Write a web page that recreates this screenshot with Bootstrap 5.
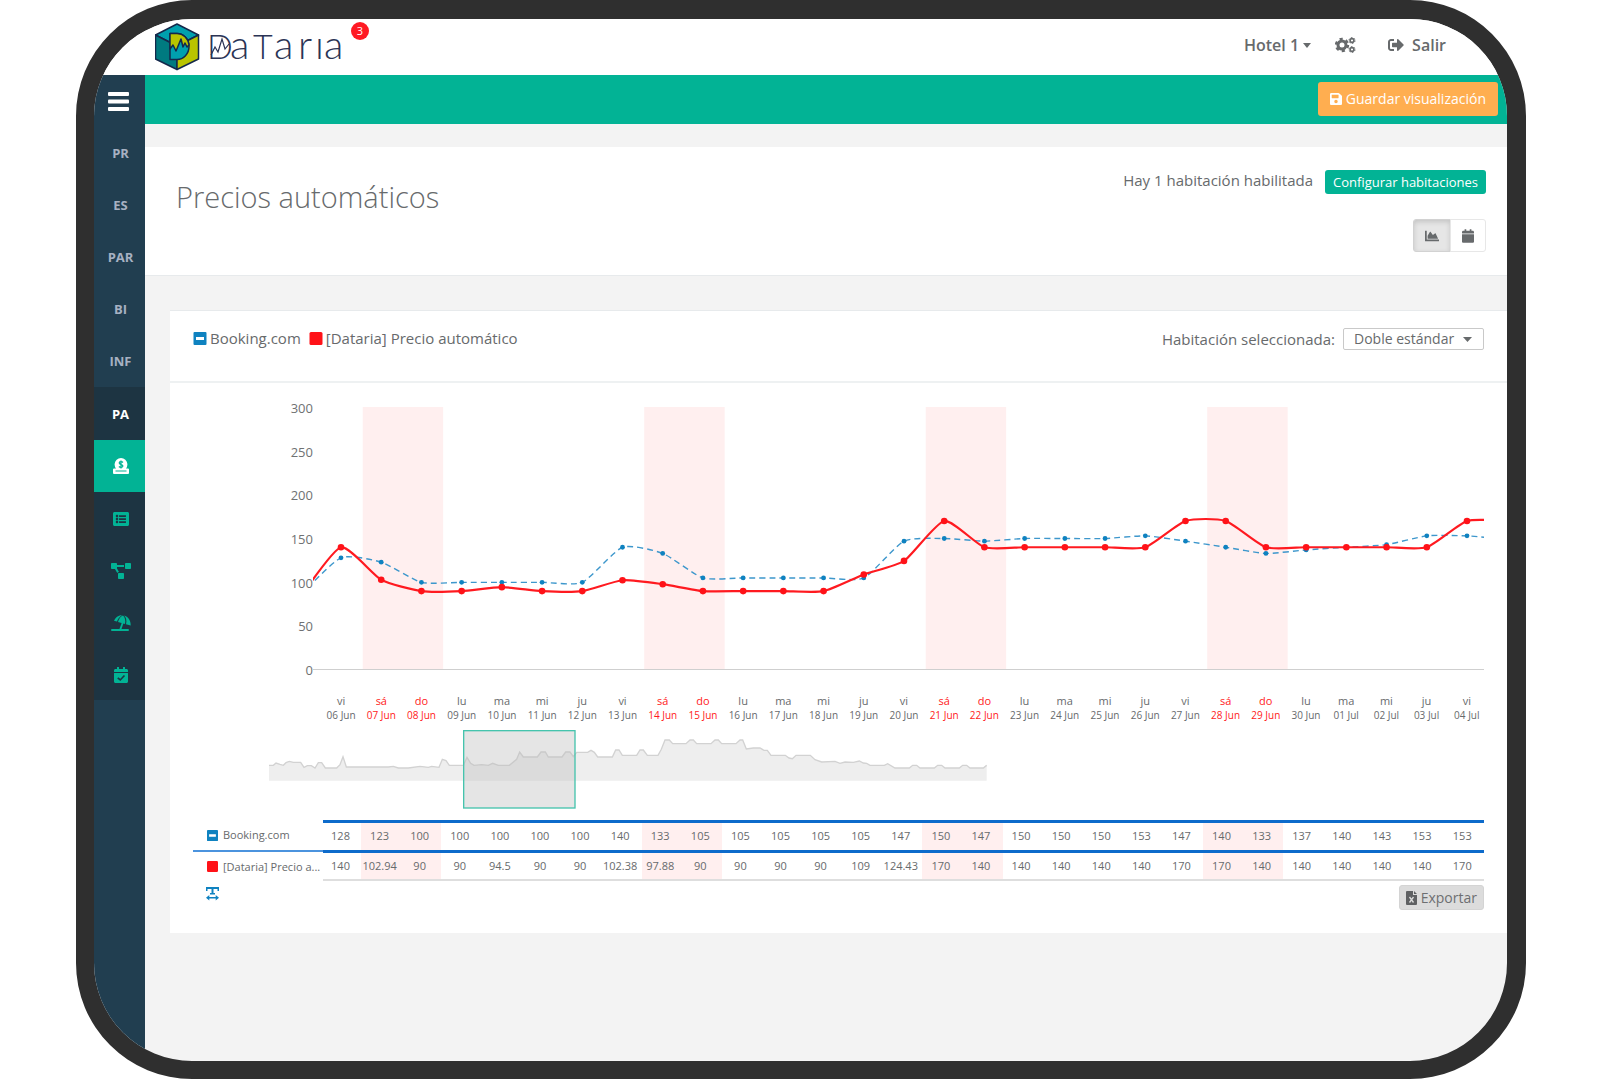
<!DOCTYPE html>
<html lang="es">
<head>
<meta charset="utf-8">
<meta name="viewport" content="width=device-width, initial-scale=1">
<title>Dataria - Precios automáticos</title>
<link href="https://cdn.jsdelivr.net/npm/bootstrap@5.3.0/dist/css/bootstrap.min.css" rel="stylesheet">
<style>
  body { font-family: "Open Sans", "Noto Sans", sans-serif; font-size: 15px; line-height: 20px; color: #676a6c; background: #fff; }
  svg { display: block; flex: none; }
  a { color: inherit; text-decoration: none; }

  .tablet { margin: 0 74px 0 76px; min-height: calc(100vh - 1px); border: 19px solid #2f2f2f; border-width: 19px 19px 18px 18px; border-radius: 116px; overflow: hidden; background: #f3f3f3; }
  .topbar { height: 56px; padding: 0 61px; }
  .topbar .top-link { font-size: 16px; font-weight: 600; line-height: 20px; }
  .notice { top: 3px; left: 196px; width: 18px; height: 18px; border-radius: 50%; background: #ff1a24; font-size: 11px; line-height: 18px; }

  .side { width: 51px; background: #213e50; }
  .side .burger { height: 52px; padding: 0 14px; }
  .side a { height: 52px; padding-left: 2px; font-size: 13px; font-weight: 700; color: #a7b1c2; }
  .side .sub { padding-top: 1px; background: #1d3442; }
  .side .sub a { padding-top: 2px; color: #02b395; }
  .side .sub a.sub-head { padding-top: 0; color: #fff; }
  .side .sub a.current { padding-top: 0; background: #02b395; color: #fff; }

  .greenbar { height: 49px; background: #02b395; padding: 0 9px 2px 0; }
  .btn-save { height: 34px; padding: 0 12px; font-size: 14px; color: #fff; background: #ffae50; border: 0; border-radius: 3px; }
  .btn-save:hover { color: #fff; background: #f5a040; }
  .heading-box { height: 129px; margin-top: 23px; padding: 23px 21px 0 31px; border-bottom: 1px solid #e7eaec; }
  .heading-box h1 { font-size: 29px; font-weight: 300; line-height: 36px; margin: 9px 0 0; }
  .btn-config { height: 24px; padding: 0 8px; margin-bottom: 1px; font-size: 13px; line-height: 22px; color: #fff; background: #02b395; border: 0; border-radius: 3px; }
  .btn-view { width: 36px; height: 33px; padding: 0; border: 1px solid #e7e7e7; border-radius: 3px; background: #fff; color: #676a6c; }
  .btn-view.btn-on { width: 38px; background: #e6e6e6; border-color: #d2d2d2; box-shadow: inset 0 2px 5px rgba(0,0,0,.15); }

  .panel { margin: 34px 0 0 25px; border-top: 1px solid #e7eaec; }
  .panel-head { height: 72px; padding: 17px 23px 0; border-bottom: 2px solid #eef1f2; }
  .panel-body { padding: 16px 23px 23px; }
  .legend-text { gap: 3px; }
  .room-box select { width: 141px; height: 22px; padding: 0 10px; border: 1px solid #c9c9c9; border-radius: 2px; appearance: none; background: #fff; color: #676a6c; font-size: 14px; line-height: 18px; }
  .room-box .caret { right: 12px; top: 9px; pointer-events: none; }

  .axis { width: 120px; height: 280px; font-size: 13px; line-height: 18px; color: #6f7173; }
  .plot { margin-top: 8px; height: 263px; }
  .plot svg { position: absolute; left: 0; top: 0; }
  .ticks { margin: 14px -3px 0 128px; }
  .tick { flex: 1 1 0; min-width: 0; font-size: 10px; line-height: 15px; }
  .tick .weekday { font-size: 11px; }
  .tick.holiday { color: #ff1a1a; }
  .preview { margin: 7px 0 11px 76px; }

  .prices { table-layout: fixed; width: 100%; border-collapse: separate; border-spacing: 0; font-size: 11px; line-height: 16px; }
  .prices th { font-weight: 400; height: 30px; padding: 0 0 0 14px; }
  .prices td { height: 30px; padding: 0 3px 2px 0; text-align: center; white-space: nowrap; border-top: 3px solid #0d6bcb; }
  .prices tr + tr th, .prices tr + tr td { height: 31px; }
  .prices tr + tr th { border-top: 2px solid #4b93de; }
  .prices tr + tr td { padding-bottom: 0; border-bottom: 2px solid #dedede; }
  .prices .weekend { background: #ffefef; }
  .prices .label-col { width: 130px; }
  .prices .first-col { width: 38px; }
  .table-label { gap: 5px; }
  .btn-export { height: 25px; padding: 0 6px; font-size: 14px; line-height: 22px; background: #dcdcdc; border: 1px solid #d4d4d4; border-radius: 3px; color: #6d6f71; }
  .btn-resize { padding: 2px 0 0 13px; border: 0; background: none; }
</style>
</head>
<body>
<svg width="0" height="0" class="position-absolute" aria-hidden="true">
  <symbol id="i-minus" viewBox="0 0 13 13"><rect width="13" height="13" rx="1" fill="#0f82c0"/><rect x="2.500" y="5" width="8" height="3" fill="#fff"/></symbol>
  <symbol id="i-square" viewBox="0 0 13 13"><rect width="13" height="13" rx="1.500" fill="#ff1218"/></symbol>
  <symbol id="i-calendar" viewBox="0 0 448 512"><path d="M12 192h424c6.600 0 12 5.400 12 12v260c0 26.500-21.500 48-48 48H48c-26.500 0-48-21.500-48-48V204c0-6.600 5.400-12 12-12zm436-44v-36c0-26.500-21.500-48-48-48h-48V12c0-6.600-5.400-12-12-12h-40c-6.600 0-12 5.400-12 12v52H160V12c0-6.600-5.400-12-12-12h-40c-6.600 0-12 5.400-12 12v52H48C21.500 64 0 85.500 0 112v36c0 6.600 5.400 12 12 12h424c6.600 0 12-5.400 12-12z" fill="currentColor"/></symbol>
</svg>

<div class="tablet d-flex flex-column">
  <header class="topbar bg-white d-flex justify-content-between align-items-start">
    <a href="#" class="position-relative" aria-label="Inicio">
      <svg width="196" height="54" viewBox="0 -4 196 54">
        <g stroke="#14284b" stroke-width="1.500" stroke-linejoin="round">
          <path d="M22 1 43.500 12 22 23 .5 12Z" fill="#00a0ae"/>
          <path d="M.5 12 22 23V46.500L.5 36Z" fill="#007a80"/>
          <path d="M43.500 12 22 23V46.500L43.500 36Z" fill="#b9c400"/>
          <path d="M15 10.500H22A12 13 0 0 1 22 36.500H15Z" fill="#00a0ae"/>
          <path d="M15 10.500H22A12 13 0 0 1 34 22L32 24 30 20 28 24 26 16 21 28 18 22 15 26Z" fill="#b9c400"/>
        </g>
        <g font-family="Lato, sans-serif" font-weight="300" fill="#2b3455">
          <text y="36" font-size="34" x="52">D</text>
          <text y="36" font-size="40" x="75">a</text>
          <text y="36" font-size="34" x="98">T</text>
          <text y="36" font-size="40" x="119">a</text>
          <text y="36" font-size="40" x="143">r</text>
          <text y="36" font-size="40" x="160">ı</text>
          <text y="36" font-size="40" x="169">a</text>
        </g>
        <path d="M56 32 60 24 63 29 67 16 70 26 74 21" fill="none" stroke="#2b3455" stroke-width="1.200"/>
      </svg>
      <span class="notice position-absolute text-white text-center">3</span>
    </a>
    <nav class="d-flex align-items-center pt-3">
      <a href="#" class="top-link d-flex align-items-center">Hotel 1
        <svg class="ms-1" width="8" height="5" viewBox="0 0 8 5"><path d="M0 0H8L4 5Z" fill="currentColor"/></svg></a>
      <a href="#" class="top-link ms-4" aria-label="Ajustes">
        <svg width="21" height="16" viewBox="0 0 21 16" fill="none" stroke="currentColor">
          <circle cx="7" cy="8" r="4" stroke-width="3"/><circle cx="7" cy="8" r="6" stroke-width="2.400" stroke-dasharray="3.140 3.140"/>
          <circle cx="17" cy="3.500" r="1.900" stroke-width="1.600"/><circle cx="17" cy="3.500" r="3" stroke-width="1" stroke-dasharray="1.570 1.570"/>
          <circle cx="17" cy="12.500" r="1.900" stroke-width="1.600"/><circle cx="17" cy="12.500" r="3" stroke-width="1" stroke-dasharray="1.570 1.570"/>
        </svg></a>
      <a href="#" class="top-link d-flex align-items-center ms-4 ps-1">
        <svg class="ms-1 me-2" width="16" height="16" viewBox="0 0 512 512"><path fill="currentColor" d="M497 273L329 441c-15 15-41 4.500-41-17v-96H152c-13.300 0-24-10.700-24-24v-96c0-13.300 10.700-24 24-24h136V88c0-21.400 25.900-32 41-17l168 168c9.300 9.400 9.300 24.600 0 34zM192 436v-40c0-6.600-5.400-12-12-12H96c-17.700 0-32-14.300-32-32V160c0-17.700 14.300-32 32-32h84c6.600 0 12-5.400 12-12V76c0-6.600-5.400-12-12-12H96c-53 0-96 43-96 96v192c0 53 43 96 96 96h84c6.600 0 12-5.400 12-12z"/></svg>
        <span>Salir</span></a>
    </nav>
  </header>

  <div class="d-flex flex-grow-1">
    <nav class="side flex-shrink-0 d-flex flex-column">
      <button class="burger btn border-0 d-flex align-items-center" aria-label="Menú">
        <svg width="21" height="19" viewBox="0 0 21 19" fill="#fff"><rect width="21" height="4" rx="1"/><rect y="7.500" width="21" height="4" rx="1"/><rect y="15" width="21" height="4" rx="1"/></svg>
      </button>
      <a href="#" class="d-flex align-items-center justify-content-center">PR</a>
      <a href="#" class="d-flex align-items-center justify-content-center">ES</a>
      <a href="#" class="d-flex align-items-center justify-content-center">PAR</a>
      <a href="#" class="d-flex align-items-center justify-content-center">BI</a>
      <a href="#" class="d-flex align-items-center justify-content-center">INF</a>
      <div class="sub">
        <a href="#" class="sub-head d-flex align-items-center justify-content-center">PA</a>
        <a href="#" class="current d-flex align-items-center justify-content-center" aria-label="Precios automáticos">
          <svg width="16" height="16" viewBox="0 0 16 16"><path d="M1 10.500H3A6.400 6.400 0 1 1 13 10.500H15Q16 10.500 16 11.500V15Q16 16 15 16H1Q0 16 0 15V11.500Q0 10.500 1 10.500ZM2.500 12.500V13.500H13.500V12.500Z" fill="#fff" fill-rule="evenodd"/><path d="M10 4.500C9 3.300 6.200 3.400 6.200 5C6.200 7 9.900 6.200 9.900 8C9.900 9.700 7 9.700 5.900 8.500M8 2.500V10.500" fill="none" stroke="#02b395" stroke-width="1.200"/></svg></a>
        <a href="#" class="d-flex align-items-center justify-content-center" aria-label="Listado">
          <svg width="16" height="16" viewBox="0 0 512 512"><path fill="currentColor" d="M464 480H48c-26.510 0-48-21.490-48-48V80c0-26.510 21.490-48 48-48h416c26.510 0 48 21.490 48 48v352c0 26.510-21.490 48-48 48zM128 120c-22 0-40 18-40 40s18 40 40 40 40-18 40-40-18-40-40-40zm0 96c-22 0-40 18-40 40s18 40 40 40 40-18 40-40-18-40-40-40zm0 96c-22 0-40 18-40 40s18 40 40 40 40-18 40-40-18-40-40-40zm288-136v-32c0-6.600-5.400-12-12-12H204c-6.600 0-12 5.400-12 12v32c0 6.600 5.400 12 12 12h200c6.600 0 12-5.400 12-12zm0 96v-32c0-6.600-5.400-12-12-12H204c-6.600 0-12 5.400-12 12v32c0 6.600 5.400 12 12 12h200c6.600 0 12-5.400 12-12zm0 96v-32c0-6.600-5.400-12-12-12H204c-6.600 0-12 5.400-12 12v32c0 6.600 5.400 12 12 12h200c6.600 0 12-5.400 12-12z"/></svg></a>
        <a href="#" class="d-flex align-items-center justify-content-center" aria-label="Reglas">
          <svg width="20" height="16" viewBox="0 0 640 512"><path fill="currentColor" d="M384 320H256c-17.670 0-32 14.330-32 32v128c0 17.670 14.330 32 32 32h128c17.670 0 32-14.330 32-32V352c0-17.670-14.330-32-32-32zM192 32c0-17.670-14.330-32-32-32H32C14.330 0 0 14.330 0 32v128c0 17.670 14.330 32 32 32h95.720l73.160 128.040C211.980 300.980 232.400 288 256 288h.280L192 175.510V128h224V64H192V32zM608 0H480c-17.670 0-32 14.330-32 32v128c0 17.670 14.330 32 32 32h128c17.670 0 32-14.330 32-32V32c0-17.670-14.330-32-32-32z"/></svg></a>
        <a href="#" class="d-flex align-items-center justify-content-center" aria-label="Temporadas">
          <svg width="20" height="16" viewBox="0 0 20 16" fill="currentColor"><rect y="14" width="18" height="2" rx="1"/><path d="M11.300 6.200 13 6.800 10.300 14.500H8.300Z"/><path d="M3 5.800C4.800 1.800 8 .3 11 .2C8.500 1.500 6.800 3.800 6 6.600Z"/><path d="M7 6.900C8 3.500 10 1 12 .5C14 2 14.800 5.500 14 9Z"/><path d="M15 9.300C16 5.500 15 2 13 .5C17 1.500 20 5.500 19.700 10.600Z"/></svg></a>
        <a href="#" class="d-flex align-items-center justify-content-center" aria-label="Eventos">
          <svg width="14" height="16" viewBox="0 0 448 512"><use href="#i-calendar"/><path d="M120 345 200 415 335 270" fill="none" stroke="#1d3442" stroke-width="52"/></svg></a>
      </div>
    </nav>

    <main class="flex-grow-1">
      <div class="greenbar d-flex align-items-center justify-content-end">
        <button class="btn btn-save d-flex align-items-center">
          <svg class="me-1" width="12" height="14" viewBox="0 0 448 512"><path fill="#fff" d="M433.900 129.900l-83.900-83.900A48 48 0 0 0 316.100 32H48C21.500 32 0 53.500 0 80v352c0 26.500 21.500 48 48 48h352c26.500 0 48-21.500 48-48V163.900a48 48 0 0 0-14.100-34zM224 416c-35.300 0-64-28.700-64-64s28.700-64 64-64 64 28.700 64 64-28.700 64-64 64zm96-304.500V212c0 6.600-5.400 12-12 12H76c-6.600 0-12-5.400-12-12V108c0-6.600 5.400-12 12-12h228.500c3.200 0 6.200 1.300 8.500 3.500l3.500 3.500a12 12 0 0 1 3.500 8.500z"/></svg>Guardar visualización</button>
      </div>

      <section class="heading-box bg-white d-flex justify-content-between align-items-start">
        <h1>Precios automáticos</h1>
        <div class="d-flex flex-column align-items-end gap-4">
          <div class="d-flex align-items-start">
            <span class="me-2 pe-1">Hay 1 habitación habilitada</span>
            <button class="btn btn-config">Configurar habitaciones</button>
          </div>
          <div class="btn-group" role="group" aria-label="Vista">
            <button class="btn btn-view btn-on d-flex align-items-center justify-content-center" aria-label="Gráfico">
              <svg width="14" height="14" viewBox="0 0 512 512"><path fill="currentColor" d="M500 384c6.600 0 12 5.400 12 12v40c0 6.600-5.400 12-12 12H12c-6.600 0-12-5.400-12-12V76c0-6.600 5.400-12 12-12h40c6.600 0 12 5.400 12 12v308h436zM372.700 159.500L288 216l-85.300-113.700c-5.100-6.800-15.500-6.300-19.900 1L96 248v104h384l-89.900-187.800c-3.200-6.500-11.400-8.700-17.400-4.700z"/></svg></button>
            <button class="btn btn-view d-flex align-items-center justify-content-center" aria-label="Calendario">
              <svg width="12" height="14"><use href="#i-calendar"/></svg></button>
          </div>
        </div>
      </section>

      <section class="panel bg-white">
        <div class="panel-head d-flex justify-content-between align-items-start">
          <div class="d-flex gap-2">
            <span class="legend-text d-flex align-items-center"><svg width="14" height="13"><use href="#i-minus"/></svg>Booking.com</span>
            <span class="legend-text d-flex align-items-center"><svg width="14" height="13"><use href="#i-square"/></svg>[Dataria] Precio automático</span>
          </div>
          <div class="room-box d-flex align-items-center position-relative">
            <label for="room" class="me-2">Habitación seleccionada:</label>
            <select id="room"><option>Doble estándar</option></select>
            <svg class="caret position-absolute" width="9" height="5" viewBox="0 0 9 5"><path d="M0 0H9L4.500 5Z" fill="#676a6c"/></svg>
          </div>
        </div>

        <div class="panel-body">
          <div class="d-flex">
            <div class="axis flex-shrink-0 d-flex flex-column justify-content-between text-end">
              <span>300</span><span>250</span><span>200</span><span>150</span><span>100</span><span>50</span><span>0</span>
            </div>
            <div class="plot flex-grow-1 position-relative" id="plot"></div>
          </div>
          <div class="ticks d-flex text-center" id="ticks"></div>
          <div class="preview"><svg id="preview" width="718" height="79" viewBox="57 210 2154 237"></svg></div>

          <table class="prices">
            <colgroup id="cols"><col class="label-col"><col class="first-col"></colgroup>
            <tbody>
              <tr id="row-booking"><th scope="row"><span class="table-label d-flex align-items-center"><svg width="11" height="11"><use href="#i-minus"/></svg>Booking.com</span></th></tr>
              <tr id="row-auto"><th scope="row"><span class="table-label d-flex align-items-center text-nowrap"><svg width="11" height="11"><use href="#i-square"/></svg>[Dataria] Precio a...</span></th></tr>
            </tbody>
          </table>
          <div class="d-flex justify-content-between align-items-start pt-1">
            <button class="btn-resize" aria-label="Ajustar ancho"><svg width="13" height="14" viewBox="0 0 13 14" fill="#0f82c0"><path d="M0 0H13V4H11.500V2H7.500V6H9V7.500H4V6H5.500V2H1.500V4H0Z"/><path d="M0 10.700 3.300 8V10H9.700V8L13 10.700 9.700 13.500V11.500H3.300V13.500Z"/></svg></button>
            <button class="btn btn-export d-flex align-items-center">
              <svg class="me-1" width="11" height="14" viewBox="0 0 11 14"><path d="M1 0H7V4H11V13Q11 14 10 14H1Q0 14 0 13V1Q0 0 1 0ZM8 0 11 3H8Z" fill="#5f6163"/><path d="M3.500 6 7.500 11.500M7.500 6 3.500 11.500" stroke="#dcdcdc" stroke-width="1.300"/></svg>Exportar</button>
          </div>
        </div>
      </section>
    </main>
  </div>
</div>

<script>
  const weekdays = ['vi', 'sá', 'do', 'lu', 'ma', 'mi', 'ju'];
  const booking = [128,123,100,100,100,100,100,140,133,105,105,105,105,105,147,150,147,150,150,150,153,147,140,133,137,140,143,153,153];
  const auto = [140,102.94,90,90,94.5,90,90,102.38,97.88,90,90,90,90,109,124.43,170,140,140,140,140,140,170,170,140,140,140,140,140,170];
  const isWeekend = i => i % 7 === 1 || i % 7 === 2;

  // Day labels and table cells
  booking.forEach((price, i) => {
    const day = i + 6, date = day <= 30 ? String(day).padStart(2, '0') + ' Jun' : '0' + (day - 30) + ' Jul';
    ticks.insertAdjacentHTML('beforeend', `<div class="tick text-nowrap ${isWeekend(i) ? 'holiday' : ''}"><div class="weekday">${weekdays[i % 7]}</div><div>${date}</div></div>`);
    const cls = isWeekend(i) ? ' class="weekend"' : '';
    document.getElementById('row-booking').insertAdjacentHTML('beforeend', `<td${cls}>${price}</td>`);
    document.getElementById('row-auto').insertAdjacentHTML('beforeend', `<td${cls}>${auto[i]}</td>`);
    if (i) cols.insertAdjacentHTML('beforeend', '<col>');
  });

  // Cardinal spline through the points
  function curve(pts) {
    const t = pts.map((p, i) => {
      const a = pts[Math.max(i - 1, 0)], b = pts[Math.min(i + 1, pts.length - 1)];
      return [(b[0] - a[0]) * 0.1, (b[1] - a[1]) * 0.1];
    });
    let d = 'M' + pts[0];
    for (let i = 1; i < pts.length; i++) {
      const p = pts[i - 1], q = pts[i];
      d += `C${p[0] + t[i - 1][0]},${p[1] + t[i - 1][1]} ${q[0] - t[i][0]},${q[1] - t[i][1]} ${q}`;
    }
    return d;
  }

  function drawPlot() {
    const w = plot.clientWidth, h = 263, step = (w - 45) / 28;
    const x = i => 28 + i * step, y = v => h - v * h / 300;
    const line = (data, before, after) => curve([before, ...data, after].map((v, i) => [x(i - 1), y(v)]));
    const dots = (data, r, c) => data.map((v, i) => `<circle cx="${x(i)}" cy="${y(v)}" r="${r}" fill="${c}"/>`).join('');
    const bands = booking.map((v, i) => i % 7 === 1 ? `<rect x="${x(i) - step * 0.46}" width="${step * 2}" height="${h}" fill="#ffefef"/>` : '').join('');
    plot.innerHTML = `<svg width="${w}" height="${h + 1}">${bands}
      <rect y="${h - 1}" width="${w}" height="1" fill="#cfcfcf"/>
      <path d="${line(booking, 86, 149)}" fill="none" stroke="#3d97cc" stroke-width="1.400" stroke-dasharray="6 4"/>${dots(booking, 2.4, '#0f82c0')}
      <path d="${line(auto, 84, 170)}" fill="none" stroke="#ff1a20" stroke-width="2.200"/>${dots(auto, 3.3, '#ff1218')}</svg>`;
  }
  drawPlot();
  addEventListener('resize', drawPlot);

  // Season overview with the selected range
  const season = '56,316 70,316 78,309 90,313 100,316 108,308 118,304 130,307 152,307 162,322 172,317 184,317 195,324 205,308 215,308 226,324 260,324 270,314 279,290 289,321 415,321 430,319 445,324 475,324 510,319 535,322 545,319 567,322 577,298 588,302 598,316 640,316 651,292 662,310 672,316 695,314 715,316 728,310 745,316 778,316 800,298 809,276 820,291 862,291 873,276 886,276 895,291 936,291 947,276 960,276 970,290 980,277 1013,277 1023,271 1033,277 1043,291 1087,291 1097,270 1107,270 1117,286 1160,286 1170,270 1180,270 1192,286 1224,286 1234,268 1245,240 1258,240 1268,251 1308,251 1320,240 1330,240 1340,251 1383,251 1395,240 1405,240 1415,251 1458,251 1470,240 1478,240 1489,267 1510,264 1530,264 1542,271 1552,271 1563,286 1606,286 1617,294 1627,296 1638,286 1681,286 1695,299 1715,306 1755,304 1770,310 1785,306 1810,307 1828,303 1840,309 1850,310 1860,316 1903,316 1913,311 1935,324 1978,324 1988,316 2000,316 2010,324 2053,324 2063,316 2075,316 2085,324 2128,324 2138,316 2150,316 2160,324 2200,324 2210,316';
  preview.innerHTML = `<polygon points="56,362 ${season} 2210,362" fill="#eeeeee"/>
    <polyline points="${season}" fill="none" stroke="#d2d2d2" stroke-width="4"/>
    <rect x="641" y="212" width="334" height="232" fill="rgba(190,190,190,.4)" stroke="#45c4ad" stroke-width="4"/>`;
</script>
<script src="https://cdn.jsdelivr.net/npm/bootstrap@5.3.0/dist/js/bootstrap.bundle.min.js"></script>
</body>
</html>
